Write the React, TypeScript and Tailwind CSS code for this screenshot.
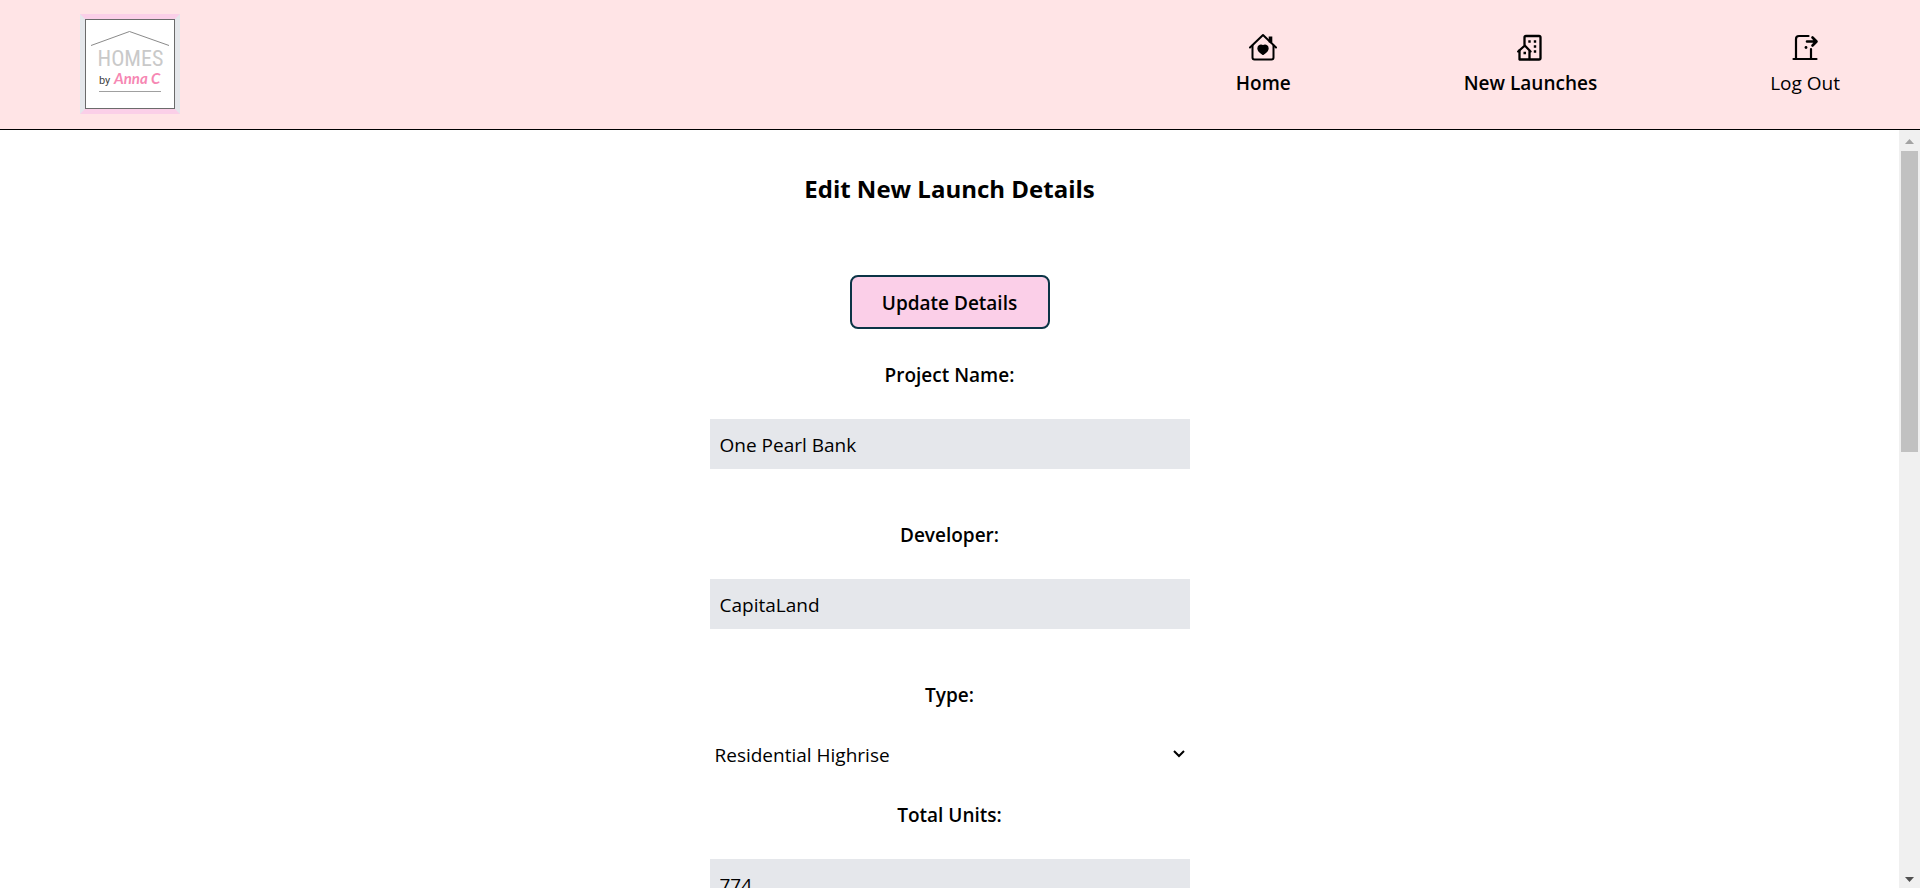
import type { ReactNode } from "react";

function Logo() {
  return (
    <svg viewBox="0 0 90 90" className="block size-[90px] bg-white" role="img" aria-label="Homes by Anna C">
      <rect x="0.5" y="0.5" width="89" height="89" fill="#fff" stroke="#6b6b6b" />
      <path d="M6 26.5 L44.500 12.500 L84 26.500" fill="none" stroke="#8a8a8a" strokeWidth="1" />
      <text x="12.500" y="46.500" fontSize="22" fill="#c9c9c9" fontFamily="'Liberation Sans Narrow', 'Roboto Condensed', sans-serif">
        HOMES
      </text>
      <text x="14" y="65" fontSize="11" fill="#444" fontFamily="Roboto, sans-serif">
        by
      </text>
      <text x="29" y="65" fontSize="15" fontStyle="italic" fontWeight="700" fill="#f687b3" fontFamily="Lato, sans-serif">
        Anna C
      </text>
      <path d="M14 72.500 H76" stroke="#a0a0a0" strokeWidth="1" />
    </svg>
  );
}

function HomeIcon() {
  return (
    <svg viewBox="0 0 30 30" className="size-[30px]" fill="none" stroke="currentColor" strokeWidth="2" strokeLinecap="round" strokeLinejoin="round" aria-hidden="true">
      <path d="M2 15.500 L15 3 L28 15.500" />
      <path d="M4.500 13.500 V25.500 Q4.500 27.500 6.500 27.500 H23.500 Q25.500 27.500 25.500 25.500 V13.500" />
      <path d="M22.500 10.500 V4.500" strokeWidth="3.600" strokeLinecap="butt" />
      <path d="M15 22.300 C12 20.500 10 18.700 10 16.200 C10 13.300 13.500 12.400 15 14.500 C16.500 12.400 20 13.300 20 16.200 C20 18.700 18 20.500 15 22.300 Z" fill="currentColor" strokeWidth="1.400" />
    </svg>
  );
}

function BuildingIcon() {
  return (
    <svg viewBox="0 0 30 30" className="size-[30px]" fill="none" stroke="currentColor" strokeWidth="2.300" strokeLinecap="round" strokeLinejoin="round" aria-hidden="true">
      <path d="M9.500 12.500 V5.500 Q9.500 4 11 4 H24 Q25.500 4 25.500 5.500 V26 Q25.500 27.500 24 27.500 H4.500 V18.500" />
      <path d="M3.200 19.500 L9.800 13.500 L15.500 19.500 M14.500 18.500 V27" />
      <path d="M13.300 9.500 H15.700 M18.800 9.500 H21.200 M18.800 14.500 H21.200 M18.800 19.500 H21.200 M8.500 21 H11" strokeWidth="2.400" strokeLinecap="butt" />
    </svg>
  );
}

function LogOutIcon() {
  return (
    <svg viewBox="0 0 30 30" className="size-[30px]" fill="none" stroke="currentColor" strokeWidth="2.200" strokeLinecap="round" strokeLinejoin="round" aria-hidden="true">
      <path d="M3.500 27 H26.500" />
      <path d="M6 27 V7 Q6 4 9 4 H18.500" />
      <path d="M21 17 V27" />
      <path d="M17 9.500 H26 M22.500 5.500 L26.500 9.500 L22.500 13.500" strokeWidth="2.600" />
      <circle cx="16" cy="15.500" r="1.400" fill="currentColor" stroke="none" />
    </svg>
  );
}

function NavLink({ icon, label, active }: { icon: ReactNode; label: string; active?: boolean }) {
  return (
    <a href="#" className="flex flex-col items-center gap-[6px]">
      {icon}
      <span className={active ? "leading-[30px] font-semibold" : "leading-[30px]"}>{label}</span>
    </a>
  );
}

function TextField({ id, label, value }: { id: string; label: string; value: string }) {
  return (
    <div className="mb-[50px] flex flex-col gap-[28px]">
      <label htmlFor={id} className="text-center leading-[32px] font-semibold">
        {label}
      </label>
      <input id={id} type="text" defaultValue={value} className="h-[50px] w-full bg-gray-200 px-[10px] pt-[2px]" />
    </div>
  );
}

export default function App() {
  return (
    <div className="flex h-screen flex-col overflow-hidden bg-white font-['Open_Sans','Noto_Sans',sans-serif] text-[19px] text-black">
      <header className="flex shrink-0 items-start justify-between border-b border-black bg-[#ffe4e6] px-20 pt-[14px] pb-[15px]">
        <a href="#" className="border-5 border-x-gray-200 border-y-[#fbcfe8]">
          <Logo />
        </a>
        <nav className="flex gap-[173px] pt-[18px]">
          <NavLink icon={<HomeIcon />} label="Home" active />
          <NavLink icon={<BuildingIcon />} label="New Launches" active />
          <NavLink icon={<LogOutIcon />} label="Log Out" />
        </nav>
      </header>
      <div className="flex min-h-0 flex-1">
        <main className="flex-1 overflow-hidden">
          <form className="mx-auto flex w-full max-w-[480px] flex-col pt-[40px]">
            <h1 className="text-center text-2xl leading-[38px] font-bold">Edit New Launch Details</h1>
            <button
              type="button"
              className="mt-[67px] mb-[30px] h-[54px] w-[200px] self-center rounded-lg border-2 border-[#0b3446] bg-[#fbcfe8] pt-[2px] font-semibold"
            >
              Update Details
            </button>
            <TextField id="project" label="Project Name:" value="One Pearl Bank" />
            <TextField id="developer" label="Developer:" value="CapitaLand" />
            <div className="mb-[30px] flex flex-col gap-[28px]">
              <label htmlFor="type" className="text-center leading-[32px] font-semibold">
                Type:
              </label>
              <div className="relative">
                <select id="type" className="block h-[30px] w-full appearance-none bg-white px-[5px] pt-[2px]">
                  <option>Residential Highrise</option>
                </select>
                <svg
                  viewBox="0 0 12 8"
                  className="pointer-events-none absolute top-[11px] right-[5px] h-[8px] w-[12px]"
                  fill="none"
                  stroke="currentColor"
                  strokeWidth="2"
                  aria-hidden="true"
                >
                  <path d="M1 1 L6 6 L11 1" />
                </svg>
              </div>
            </div>
            <TextField id="units" label="Total Units:" value="774" />
          </form>
        </main>
        <div className="flex w-[21px] shrink-0 flex-col items-center bg-[#f0f0f0]" aria-hidden="true">
          <svg viewBox="0 0 21 21" className="size-[21px] shrink-0" fill="#a3a3a3">
            <path d="M6 14 L10.500 9 L15 14 Z" />
          </svg>
          <div className="flex min-h-0 w-[17px] flex-1 flex-col">
            <div className="h-[42%] bg-[#c1c1c1]" />
          </div>
          <svg viewBox="0 0 21 21" className="size-[21px] shrink-0" fill="#505050">
            <path d="M6 10 L10.500 15 L15 10 Z" />
          </svg>
        </div>
      </div>
    </div>
  );
}
